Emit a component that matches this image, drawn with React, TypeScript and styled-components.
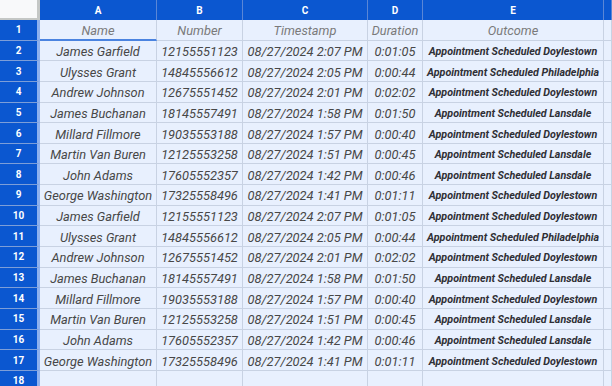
import React from 'react';
import styled, { createGlobalStyle } from 'styled-components';

const GlobalStyle = createGlobalStyle`
  html, body {
    margin: 0;
    padding: 0;
    background: #e8f0fe;
    overflow: hidden;
  }
  * {
    box-sizing: border-box;
  }
`;

const Sheet = styled.div`
  display: grid;
  grid-template-columns: 40px 117px 86px 125px 55px 181px 1fr;
  grid-template-rows: 20px;
  grid-auto-rows: 20.65px;
  width: 612px;
  height: 386px;
  overflow: hidden;
  font-family: Roboto, 'Liberation Sans', sans-serif;
  background: #e8f0fe;
`;

const Corner = styled.div`
  background: #f8f9fa;
  border-right: 3px solid #c4c7c5;
  border-bottom: 2px solid #c4c7c5;
`;

const ColHeader = styled.div`
  background: #0b57d0;
  color: #fff;
  font-size: 10px;
  font-weight: 700;
  display: flex;
  align-items: center;
  justify-content: center;
  border-right: 1px solid #5a86d6;
`;

const RowHeader = styled.div`
  background: #0b57d0;
  color: #fff;
  font-size: 10px;
  font-weight: 700;
  display: flex;
  align-items: center;
  justify-content: center;
  border-bottom: 1px solid #7d9ed8;
  border-right: 3px solid #8fb1ee;
`;

const Cell = styled.div<{ $head?: boolean; $bold?: boolean; $selected?: boolean }>`
  display: flex;
  align-items: center;
  justify-content: center;
  white-space: nowrap;
  overflow: hidden;
  font-style: italic;
  font-size: ${p => (p.$bold ? '10.7px' : '12.8px')};
  font-weight: ${p => (p.$bold ? 700 : 400)};
  color: ${p => (p.$head ? '#7a7a7a' : p.$bold ? '#2f2f35' : '#474747')};
  border-right: 1px solid #c8d2e3;
  border-bottom: ${p => (p.$selected ? '2px solid #4a83e0' : '1px solid #c8d2e3')};
  padding-top: 2px;
`;

type Row = [string, string, string, string, string];

const rows: Row[] = [
  ['James Garfield', '12155551123', '08/27/2024 2:07 PM', '0:01:05', 'Appointment Scheduled Doylestown'],
  ['Ulysses Grant', '14845556612', '08/27/2024 2:05 PM', '0:00:44', 'Appointment Scheduled Philadelphia'],
  ['Andrew Johnson', '12675551452', '08/27/2024 2:01 PM', '0:02:02', 'Appointment Scheduled Doylestown'],
  ['James Buchanan', '18145557491', '08/27/2024 1:58 PM', '0:01:50', 'Appointment Scheduled Lansdale'],
  ['Millard Fillmore', '19035553188', '08/27/2024 1:57 PM', '0:00:40', 'Appointment Scheduled Doylestown'],
  ['Martin Van Buren', '12125553258', '08/27/2024 1:51 PM', '0:00:45', 'Appointment Scheduled Lansdale'],
  ['John Adams', '17605552357', '08/27/2024 1:42 PM', '0:00:46', 'Appointment Scheduled Lansdale'],
  ['George Washington', '17325558496', '08/27/2024 1:41 PM', '0:01:11', 'Appointment Scheduled Doylestown'],
];

const data: Row[] = [...rows, ...rows];

const columns = ['A', 'B', 'C', 'D', 'E', ''];
const heads = ['Name', 'Number', 'Timestamp', 'Duration', 'Outcome'];

const App: React.FC = () => {
  return (
    <>
      <GlobalStyle />
      <Sheet>
        <Corner />
        {columns.map((c, i) => (
          <ColHeader key={i}>{c}</ColHeader>
        ))}

        <RowHeader>1</RowHeader>
        {heads.map((h, i) => (
          <Cell key={h} $head $selected={i === 0}>{h}</Cell>
        ))}
        <Cell />

        {data.map((r, ri) => (
          <React.Fragment key={ri}>
            <RowHeader>{ri + 2}</RowHeader>
            {r.map((v, ci) => (
              <Cell key={ci} $bold={ci === 4}>{v}</Cell>
            ))}
            <Cell />
          </React.Fragment>
        ))}

        <RowHeader>18</RowHeader>
        {heads.map(h => (
          <Cell key={h} />
        ))}
        <Cell />
      </Sheet>
    </>
  );
};

export default App;
